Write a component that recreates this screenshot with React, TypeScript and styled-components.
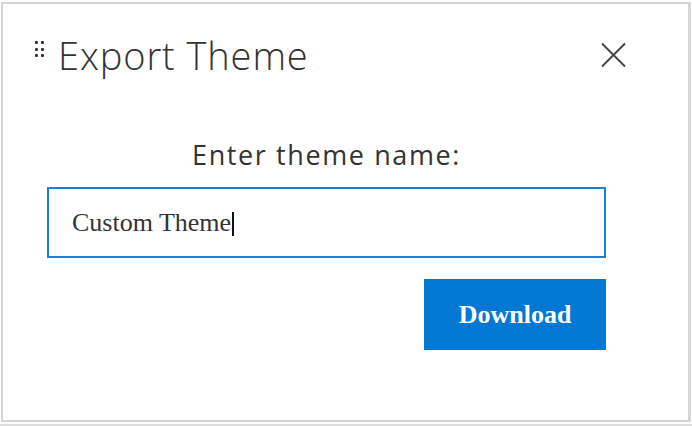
import * as React from 'react';
import styled, {createGlobalStyle} from "styled-components";

const GlobalStyle = createGlobalStyle`
  html, body {
    margin: 0;
    padding: 0;
    background: #ffffff;
  }
  body {
    font-family: "Segoe UI", "Open Sans", "Liberation Sans", sans-serif;
  }
`;

export default function App() {
    return (
        <Page>
            <GlobalStyle/>
            <Dialog>
                <Header>
                    <Grip>
                        {[0, 1, 2, 3, 4, 5].map(i => <Dot key={i}/>)}
                    </Grip>
                    <Title>Export Theme</Title>
                    <CloseButton aria-label="Close">
                        <svg width="26" height="26" viewBox="0 0 26 26">
                            <path d="M1 1.5 L24 24.5 M24 1.5 L1 24.5" stroke="#444" strokeWidth="1.9"
                                  fill="none"/>
                        </svg>
                    </CloseButton>
                </Header>
                <Body>
                    <Label>Enter theme name:</Label>
                    <NameField>
                        Custom Theme<Caret/>
                    </NameField>
                    <Actions>
                        <Button>Download</Button>
                    </Actions>
                </Body>
            </Dialog>
        </Page>
    );
}

const Page = styled.div`
  width: 692px;
  height: 426px;
  box-sizing: border-box;
  padding: 2px 1px 1px 1px;
  border-bottom: 2px solid #dcdcdc;
`;

const Dialog = styled.div`
  box-sizing: border-box;
  width: 690px;
  height: 420px;
  border: 2px solid #d6d6d6;
  border-right-width: 3px;
  background: #fff;
  display: flex;
  flex-direction: column;
`;

const Header = styled.div`
  display: flex;
  align-items: center;
  height: 58px;
  margin-top: 22px;
  padding-left: 32px;
  padding-right: 61px;
`;

const Grip = styled.div`
  display: grid;
  grid-template-columns: repeat(2, 3px);
  grid-auto-rows: 3px;
  column-gap: 3px;
  row-gap: 3.5px;
  margin-top: -12px;
`;

const Dot = styled.span`
  width: 3px;
  height: 3px;
  border-radius: 1px;
  background: #333;
`;

const Title = styled.h1`
  margin: 0 0 0 14px;
  font-size: 38px;
  font-weight: 300;
  color: #333;
  letter-spacing: 0.9px;
  flex: 1;
`;

const CloseButton = styled.button`
  border: 0;
  background: none;
  padding: 0;
  width: 26px;
  height: 26px;
  display: flex;
`;

const Body = styled.div`
  margin-left: 44px;
  width: 559px;
  display: flex;
  flex-direction: column;
`;

const Label = styled.div`
  margin-top: 55px;
  text-align: center;
  font-size: 27px;
  color: #333;
  letter-spacing: 1.6px;
  line-height: 32px;
`;

const NameField = styled.div`
  margin-top: 16px;
  box-sizing: border-box;
  height: 71px;
  border: 2px solid #1a7fd6;
  padding-left: 23px;
  display: flex;
  align-items: center;
  font-family: "Liberation Serif", "Times New Roman", serif;
  font-size: 26px;
  color: #333;
`;

const Caret = styled.span`
  display: inline-block;
  width: 1.5px;
  height: 24px;
  background: #111;
  margin-left: 1px;
  margin-top: 2px;
`;

const Actions = styled.div`
  display: flex;
  justify-content: flex-end;
  margin-top: 21px;
`;

const Button = styled.button`
  width: 182px;
  height: 71px;
  border: 0;
  background: #0078d4;
  color: #fff;
  font-family: "Liberation Serif", "Times New Roman", serif;
  font-weight: bold;
  font-size: 26px;
  padding: 0;
`;
